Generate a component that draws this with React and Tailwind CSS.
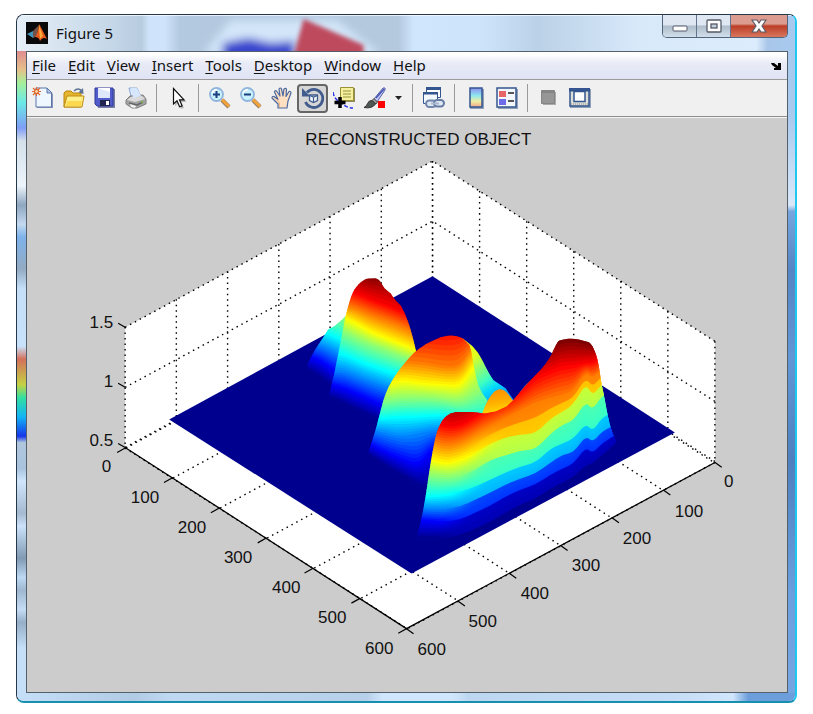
import { useId } from "react"

const MENUS = ["File", "Edit", "View", "Insert", "Tools", "Desktop", "Window", "Help"]

const LEVELS = [1, 0.87, 0.75, 0.62, 0.5, 0.375, 0.25, 0.12, 0]

// each column: x, then the y of every level in LEVELS
const BUMP = [
  [304, 280, 288, 294, 300, 312, 328, 342, 354, 368],
  [318, 280, 288, 294, 300, 314, 329, 343, 358, 376],
  [330, 280, 288, 294, 300, 313, 333, 349, 367, 386],
  [346, 280, 288, 296, 303, 318, 340, 358, 376, 396],
]

const BACK_HILL = [
  [328, 265, 285, 300, 312, 328, 350, 370, 383, 397],
  [340, 268, 288, 303, 315, 330, 351, 369, 386, 402],
  [355, 270, 292, 307, 322, 338, 358, 375, 392, 410],
  [370, 274, 299, 314, 331, 345, 364, 381, 399, 416],
  [385, 274, 304, 319, 337, 350, 369, 386, 405, 423],
  [400, 278, 310, 325, 343, 356, 374, 391, 411, 429],
  [418, 288, 318, 333, 350, 362, 379, 397, 417, 436],
]

const MIDDLE_HILL = [
  [364, 320, 340, 360, 382, 400, 417, 428, 440, 452],
  [380, 318, 338, 360, 384, 401, 417, 431, 449, 463],
  [400, 310, 332, 360, 379, 398, 415, 436, 457, 475],
  [418, 305, 330, 361, 382, 398, 415, 433, 464, 486],
  [430, 300, 329, 363, 383, 398, 414, 430, 449, 492],
  [445, 298, 330, 366, 384, 400, 414, 428, 442, 495],
  [460, 298, 328, 365, 385, 402, 418, 432, 446, 495],
  [472, 300, 322, 344, 366, 396, 420, 434, 448, 495],
  [490, 300, 315, 330, 345, 385, 420, 434, 448, 495],
]

const RIDGE = [
  [410, 390, 416, 436, 456, 474, 494, 507, 518, 538],
  [430, 395, 420, 439, 458, 475, 495, 508, 520, 539],
  [445, 396, 426, 444, 463, 477, 494, 508, 521, 537],
  [460, 396, 425, 441, 459, 475, 491, 506, 519, 533],
  [475, 392, 416, 432, 452, 469, 486, 499, 512, 527],
  [490, 388, 406, 424, 443, 459, 479, 492, 505, 520],
  [505, 380, 400, 417, 437, 455, 472, 484, 496, 511],
  [520, 372, 391, 409, 434, 450, 466, 478, 489, 503],
  [535, 356, 376, 402, 433, 449, 462, 473, 484, 497],
  [550, 343, 370, 397, 418, 433, 448, 462, 474, 487],
  [562, 339, 365, 394, 411, 424, 443, 454, 468, 481],
  [573, 338, 365, 390, 404, 420, 438, 452, 463, 475],
  [585, 341, 362, 371, 383, 401, 423, 435, 447, 464],
  [592, 343, 362, 378, 396, 410, 431, 442, 453, 462],
  [602, 345, 356, 367, 382, 394, 416, 430, 442, 453],
  [616, 345, 356, 366, 380, 392, 411, 424, 434, 441],
]

const clamp = (v) => Math.max(0, Math.min(1, v))

function jet(t) {
  const c = [3, 2, 1].map((k) => Math.round(255 * clamp(1.5 - Math.abs(4 * t - k))))
  return `rgb(${c.join(",")})`
}

function curve(points) {
  let d = `${points[0][0]} ${points[0][1]}`
  for (let i = 1; i < points.length - 1; i++) {
    const [x, y] = points[i]
    const [nx, ny] = points[i + 1]
    d += `Q${x} ${y} ${(x + nx) / 2} ${(y + ny) / 2}`
  }
  const last = points[points.length - 1]
  return `${d}L${last[0]} ${last[1]}`
}

// every band reaches a little under the next one so that no seam shows
function bands(columns, steps) {
  const out = []
  for (let i = 0; i < LEVELS.length - 1; i++) {
    const n = steps(LEVELS[i])
    const at = (f) => columns.map((c) => [c[0], c[i + 1] + (c[i + 2] - c[i + 1]) * f])
    for (let s = 0; s < n; s++) {
      const t = LEVELS[i] + (LEVELS[i + 1] - LEVELS[i]) * (n === 1 ? 0.5 : s / n)
      const top = at(s / n)
      const bottom = at((s + 1) / n).map(([x, y]) => [x, y + 1]).reverse()
      out.push({ fill: jet(t), d: `M${curve(top)}L${curve(bottom)}Z` })
    }
  }
  return out
}

function Hill({ outline, columns, stepped }) {
  const id = useId()
  return (
    <g clipPath={`url(#${id})`}>
      <clipPath id={id}>
        <path d={outline} />
      </clipPath>
      {bands(columns, () => 7).map((b, i) => (
        <path key={i} d={b.d} fill={b.fill} />
      ))}
      {stepped && (
        <g mask="url(#stepFade)" opacity="0.85">
          {bands(columns, (t) => (t > 0.8 ? 7 : t > 0.7 ? 2 : 1)).map((b, i) => (
            <path key={i} d={b.d} fill={b.fill} />
          ))}
        </g>
      )}
    </g>
  )
}

const steps = [0, 1, 2, 3, 4, 5, 6]

const X_LABELS = [[111, 472], [159, 502], [206, 532], [252, 562], [300, 592], [346, 622], [393, 653]]
const Y_LABELS = [[723, 487], [674, 516], [622, 543], [571, 570], [520, 598], [468, 626], [417, 654]]
const Z_LABELS = [["1.5", 113, 328], ["1", 113, 387], ["0.5", 113, 446]]

function SurfacePlot() {
  return (
    <svg viewBox="27 118 759 573" className="block h-auto w-full" role="img" aria-label="Reconstructed object surface">
      <defs>
        <linearGradient id="stepRamp" gradientUnits="userSpaceOnUse" x1="462" y1="470" x2="486" y2="480">
          <stop offset="0" stopColor="#000" />
          <stop offset="1" stopColor="#fff" />
        </linearGradient>
        <mask id="stepFade" maskUnits="userSpaceOnUse" x="400" y="320" width="230" height="240">
          <rect x="400" y="320" width="230" height="240" fill="url(#stepRamp)" />
        </mask>
        <linearGradient id="flank" gradientUnits="userSpaceOnUse" x1="470" y1="358" x2="500" y2="402">
          <stop offset="0" stopColor="#e4ff1b" />
          <stop offset="0.25" stopColor="#8fff70" />
          <stop offset="0.5" stopColor="#40ffc0" />
          <stop offset="0.7" stopColor="#00d8ff" />
          <stop offset="1" stopColor="#0c8cff" />
        </linearGradient>
        <linearGradient id="knob" x1="0" y1="0" x2="0.2" y2="1">
          <stop offset="0" stopColor="#ff8a00" />
          <stop offset="0.5" stopColor="#ffae00" />
          <stop offset="1" stopColor="#ffe600" />
        </linearGradient>
        <linearGradient id="farSide" x1="0" y1="0.5" x2="1" y2="0.3">
          <stop offset="0" stopColor="#20c8ff" />
          <stop offset="0.5" stopColor="#50ffb0" />
          <stop offset="1" stopColor="#a0ff60" />
        </linearGradient>
      </defs>

      <path d="M125 327 432 161 714 341V462L406 628 125 447Z" fill="#fff" />

      <g fill="none" stroke="#000" strokeWidth="1.4" strokeDasharray="1.5 4">
        {[0, 60, 120].map((dz) => (
          <path key={dz} d={`M125 ${327 + dz}L432 ${161 + dz}L714 ${341 + dz}`} />
        ))}
        {steps.map((i) => (
          <g key={i}>
            <path d={`M${432 - i * 51.17} ${161 + i * 27.6}v121l281 180`} />
            <path d={`M${432 + i * 47} ${161 + i * 30}v121l-307 166`} />
          </g>
        ))}
      </g>

      <path d="M125 447 406 628 714 462" fill="none" stroke="#000" strokeWidth="1.3" />
      <g stroke="#000" strokeWidth="1.2">
        {steps.map((i) => (
          <g key={i}>
            <path d={`M${126 + i * 46.8} ${447 + i * 30.1}l-9 5`} />
            <path d={`M${406 + i * 51.3} ${628 - i * 27.7}l7 5`} />
          </g>
        ))}
        <path d="M125 327l-7-4M125 387l-7-4M125 447l-7-4" />
      </g>

      <path d="M432 276 674 432 411 573 169 419Z" fill="#00008f" />

      <Hill columns={BUMP} outline="M304 372 309 360 315 349 321 340 328 329 334 326 342 319 347 314 344 340 336 380 330 396Z" />
      <Hill
        columns={BACK_HILL}
        outline="M327 400C333 381 336 362 340 343C344 322 347 304 353 291C357 284 363 279 368 278H375Q379 279 381 283L384 288 390 293 395 300 400 305C405 313 410 327 413 340L416 353 420 440 327 440Z"
      />
      <path d="M462 338 472 346 477 352C482 359 487 372 493 380L505 388 514 401 504 416 480 414Z" fill="url(#flank)" />
      <Hill
        columns={MIDDLE_HILL}
        outline="M366 456C373 440 377 422 381 407C386 387 394 375 405 362C413 352 421 346 429 342L440 337Q453 333 462 338L469 345C472 354 472 364 475 374C477 386 481 393 487 400L482 415 450 440 440 510H366Z"
      />
      <path d="M514 402C519 391 525 383 535 377L530 395 516 406Z" fill="url(#farSide)" />
      <path d="M480 418C485 403 491 390 499 389C507 389 509 398 516 404L510 418Z" fill="url(#knob)" />
      <Hill
        stepped
        columns={RIDGE}
        outline="M414 542C421 523 424 504 427 483C431 458 434 435 439 425Q444 413 455 411.500H473L484 413 495 411 506 406C514 400 521 389 530 380C539 371 546 364 551 354C555 345 558 338 563 337L579 338C587 339 591 343 594 351C598 361 599 373 601 385C605 402 607 421 612 433L616 442 560 500 470 545Z"
      />

      <g className="font-['Liberation_Sans',Arial,sans-serif] text-[17px]" fill="#111">
        <text x="305" y="145">RECONSTRUCTED OBJECT</text>
        {X_LABELS.map(([x, y], i) => (
          <text key={i} x={x} y={y} textAnchor="end">{i * 100}</text>
        ))}
        {Y_LABELS.map(([x, y], i) => (
          <text key={i} x={x} y={y}>{i * 100}</text>
        ))}
        {Z_LABELS.map(([label, x, y]) => (
          <text key={label} x={x} y={y} textAnchor="end">{label}</text>
        ))}
      </g>
    </svg>
  )
}

function Icon({ children }) {
  return (
    <svg viewBox="0 0 22 22" className="size-[22px] shrink-0" aria-hidden="true">
      {children}
    </svg>
  )
}

function NewIcon() {
  return (
    <Icon>
      <path d="M5 2h11l5 5v14H5z" fill="#8a93b8" />
      <path d="M4 1h11l4.500 4.500V20H4z" fill="#eef6ff" stroke="#5a74ac" />
      <path d="M15 1v5h5z" fill="#b8c9e8" stroke="#5a74ac" />
      <path d="M4.500 0v9M0 4.500h9M1 1l7 7M8 1 1 8" stroke="#e2672c" strokeWidth="1.200" />
      <circle cx="4.500" cy="4.500" r="2" fill="#ffd9a0" stroke="#d9531e" />
    </Icon>
  )
}

function OpenIcon() {
  return (
    <Icon>
      <path d="M1 20V6l2-2h5l2 2h8v14z" fill="#e5b52f" stroke="#b98508" />
      <path d="M4 9h17l-2 11H1z" fill="#fff08a" stroke="#bd8c10" />
      <path d="M4 14h15l-1 5H3z" fill="#fbd84e" />
      <path d="M11 4q4-4 8 0" fill="none" stroke="#5d7394" strokeWidth="1.500" />
      <path d="m20 1 .5 6-5-1.500z" fill="#5d7394" />
    </Icon>
  )
}

function SaveIcon() {
  return (
    <Icon>
      <path d="M2 2h19v19H4z" fill="#777fa6" />
      <path d="M1 1h18v18H3l-2-2z" fill="#4f5cca" stroke="#30389a" />
      <path d="M4 1h12v10H4z" fill="#dfe8fa" />
      <path d="M4 1h12v4z" fill="#fff" />
      <path d="M6 13h10v6H6z" fill="#22264e" />
      <path d="M12 14h3v4h-3z" fill="#fff" />
    </Icon>
  )
}

function PrintIcon() {
  return (
    <Icon>
      <path d="M4 1h8l4 9-9 3z" fill="#dceaff" stroke="#8ba7d6" />
      <path d="M1 13 5 9l13-1 3 4v5l-9 4H7l-6-4z" fill="#a2a2a2" stroke="#808080" />
      <path d="m2 13 4-3 11-1 3 3-10 3z" fill="#dadada" />
      <path d="M6 1h6l4 8-8 2z" fill="#d5e6fd" />
      <path d="M4 16l8 2 6-3" fill="none" stroke="#666" strokeWidth="1.500" />
      <path d="m5 17 6 2-1 2-4-1z" fill="#f4f4f4" />
      <path d="M16 15h2" stroke="#76bb3f" strokeWidth="1.500" />
    </Icon>
  )
}

function PointerIcon() {
  return (
    <Icon>
      <path d="M8 3v16l3.500-3 2.500 6 3-1-2.500-6h5z" fill="#999" opacity=".6" />
      <path d="M6.500 1.500v15.500l3.500-3.200 2.600 6 2.500-1-2.600-6H17z" fill="#fff" stroke="#111" strokeWidth="1.200" />
    </Icon>
  )
}

function ZoomIcon({ plus }) {
  return (
    <Icon>
      <path d="m13 13 7 7" stroke="#9a7f69" strokeWidth="4.500" />
      <path d="m13 12.500 7 7" stroke="#f2a33c" strokeWidth="3" />
      <circle cx="7.500" cy="7.500" r="6.500" fill="#c9f1fb" stroke="#8fb4dd" strokeWidth="1.800" />
      <path d="M3 6q1-3 5-3.500" fill="none" stroke="#fff" strokeWidth="1.500" />
      <path d="M4 7.500h7" stroke="#1c3f80" strokeWidth="2" />
      {plus && <path d="M7.500 4v7" stroke="#1c3f80" strokeWidth="2" />}
    </Icon>
  )
}

function HandIcon() {
  return (
    <Icon>
      <path
        d="M7 21v-4L1 11q0-2 2-1.500l4 3L3.500 5q.5-2 2-1L9 9 8 2q1.500-2 2.500 0l1.500 7 1-7q2-1.500 2.500.5L15 9.500l3-5q2-.5 2 1.500l-3 8-1 7z"
        fill="#ffdfc2"
        stroke="#4b689e"
        strokeWidth="1.200"
        strokeLinejoin="round"
      />
      <path d="M8.500 20v-4l-3-4" fill="none" stroke="#f0b78b" />
    </Icon>
  )
}

function RotateIcon() {
  return (
    <Icon>
      <path d="M5 5.500A9 9 0 1 1 3.500 15" fill="none" stroke="#415c8d" strokeWidth="2.800" />
      <path d="M0 1v8.500h8.500z" fill="#415c8d" />
      <path d="M7.500 8h8v5.500l-4 2-4-2z" fill="#eef3fa" stroke="#415c8d" strokeWidth="1.300" />
      <path d="m7.500 8.500 4 1.500 4-1.500M11.500 10v5.500" fill="none" stroke="#415c8d" strokeWidth="1.200" />
    </Icon>
  )
}

function DataCursorIcon() {
  return (
    <Icon>
      <path d="M8 1h14v14H8z" fill="#8f8a5a" />
      <path d="M7.500.5h13v13h-13z" fill="#f5f0a0" stroke="#9a9232" />
      <path d="M10 4h8M10 7h8M10 10h8" stroke="#98923c" />
      <path d="M0 5q1 7 7 10 6 6 13 6" fill="none" stroke="#2a30ee" strokeWidth="1.500" strokeDasharray="4 2" />
      <path d="M7 10v11M1.500 15.500h11" stroke="#000" strokeWidth="3.500" />
    </Icon>
  )
}

function BrushIcon() {
  return (
    <Icon>
      <path d="m10 12 9-11q3-1 2 2l-8 12z" fill="#c5cdf2" stroke="#5661a8" />
      <path d="M12 11 20 2" stroke="#4652b5" strokeWidth="1.500" />
      <path d="M10 11.500 13.500 15l-1.500 2-4-3.500z" fill="#9c9c9c" stroke="#444" />
      <path d="M8 13.500 11.500 17Q8 22 0 20.500 3 19 3.500 16.500 5 13 8 13.500z" fill="#4f5753" stroke="#333" />
      <path d="M14 14h7v7h-7z" fill="#f00" />
    </Icon>
  )
}

function LinkIcon() {
  return (
    <Icon>
      <path d="M3.500.5h14v10h-14z" fill="#fff" stroke="#34558f" />
      <path d="M3 0h15v3H3z" fill="#34558f" />
      <path d="M.5 5.500h14v11H.5z" fill="#f4f8ff" stroke="#34558f" />
      <path d="M0 5h15v2.500H0z" fill="#34558f" />
      <rect x="3" y="13.500" width="10" height="6.500" rx="3.200" fill="#dfe7f3" stroke="#7186ab" strokeWidth="2" />
      <rect x="11" y="13" width="10" height="6.500" rx="3.200" fill="#dfe7f3" stroke="#667ca4" strokeWidth="2" />
      <path d="M8 16.500h8" stroke="#a9b7cf" strokeWidth="2" />
    </Icon>
  )
}

function ColorbarIcon() {
  return (
    <Icon>
      <defs>
        <linearGradient id="bar" x1="0" y1="0" x2="0" y2="1">
          <stop offset="0" stopColor="#8e8df0" />
          <stop offset="0.4" stopColor="#8ee7ee" />
          <stop offset="0.7" stopColor="#f1efa0" />
          <stop offset="1" stopColor="#f2a88e" />
        </linearGradient>
      </defs>
      <path d="M5 2h14v20H5z" fill="#8fa0b8" />
      <path d="M5 1h12v19H5z" fill="url(#bar)" stroke="#34558f" strokeWidth="1.500" />
    </Icon>
  )
}

function LegendIcon() {
  return (
    <Icon>
      <path d="M2 2h20v20H2z" fill="#8fa0b8" />
      <path d="M1 1h19v19H1z" fill="#f2f6fd" stroke="#34558f" strokeWidth="1.500" />
      <path d="M3 4h7v6H3z" fill="#e76668" />
      <path d="M3 12h7v6H3z" fill="#6c6ce8" />
      <path d="M12 6h6M12 14h6" stroke="#222" strokeWidth="1.500" />
    </Icon>
  )
}

function HideToolsIcon() {
  return (
    <Icon>
      <path d="M5 5h13v13H5z" fill="#aaa" />
      <path d="M3.500 3.500h13v13h-13z" fill="#969696" stroke="#858585" />
      <path d="M4 4h12v2H4z" fill="#858585" />
    </Icon>
  )
}

function ShowToolsIcon() {
  return (
    <Icon>
      <path d="M1 2h21v19H1z" fill="#8fa0b8" />
      <path d="M1 2h19v17H1z" fill="#dcdfd8" stroke="#34558f" strokeWidth="1.500" />
      <path d="M0 1h21v3.500H0z" fill="#34558f" />
      <path d="M5 4.500h11v10H5z" fill="#fff" stroke="#34558f" strokeWidth="1.500" />
      <path d="M2 17h17" stroke="#8c8d83" strokeDasharray="1 1" />
    </Icon>
  )
}

function Tool({ label, pressed, children }) {
  return (
    <button
      type="button"
      aria-label={label}
      aria-pressed={pressed}
      className={
        pressed
          ? "flex h-[29px] w-[31px] shrink-0 items-center justify-center rounded-[4px] border-2 border-[#666] bg-[#d6d6d6]"
          : "flex h-[29px] w-[31px] shrink-0 items-center justify-center"
      }
    >
      {children}
    </button>
  )
}

function Separator() {
  return (
    <div className="flex w-[11px] shrink-0 justify-center">
      <div className="h-7 w-px bg-[#9a9a9a]" />
    </div>
  )
}

function Toolbar() {
  return (
    <div className="flex h-[37px] items-center border-b border-[#8c8c8c] bg-[#f0f0f0]" role="toolbar">
      <Tool label="New Figure"><NewIcon /></Tool>
      <Tool label="Open File"><OpenIcon /></Tool>
      <Tool label="Save Figure"><SaveIcon /></Tool>
      <Tool label="Print Figure"><PrintIcon /></Tool>
      <Separator />
      <Tool label="Edit Plot"><PointerIcon /></Tool>
      <Separator />
      <Tool label="Zoom In"><ZoomIcon plus /></Tool>
      <Tool label="Zoom Out"><ZoomIcon /></Tool>
      <Tool label="Pan"><HandIcon /></Tool>
      <Tool label="Rotate 3D" pressed><RotateIcon /></Tool>
      <Tool label="Data Cursor"><DataCursorIcon /></Tool>
      <Tool label="Brush"><BrushIcon /></Tool>
      <button type="button" aria-label="Brush options" className="flex h-7 w-[17px] shrink-0 items-center justify-center">
        <svg viewBox="0 0 7 4" className="h-1 w-[7px]"><path d="M0 0h7L3.500 4z" fill="#222" /></svg>
      </button>
      <Separator />
      <Tool label="Link Plot"><LinkIcon /></Tool>
      <Separator />
      <Tool label="Insert Colorbar"><ColorbarIcon /></Tool>
      <Tool label="Insert Legend"><LegendIcon /></Tool>
      <Separator />
      <Tool label="Hide Plot Tools"><HideToolsIcon /></Tool>
      <Tool label="Show Plot Tools"><ShowToolsIcon /></Tool>
    </div>
  )
}

function MenuBar() {
  return (
    <nav className="flex h-7 items-center gap-3 border-b border-[#9b9b9b] bg-linear-to-b from-white from-10% via-[#e9ebf6] via-40% to-[#dfe3f4] px-[5px] font-['Noto_Sans','Open_Sans',sans-serif] text-[15px] text-[#111]">
      {MENUS.map((m) => (
        <button key={m} type="button">
          <span className="underline underline-offset-2">{m[0]}</span>
          {m.slice(1)}
        </button>
      ))}
      <button type="button" aria-label="Dock Figure" className="mr-px ml-auto">
        <svg viewBox="0 0 10 8" className="h-2 w-[10px]">
          <path d="M0 1h3l4 3V1h3v7H3V6h2L1 3z" fill="#000" />
        </svg>
      </button>
    </nav>
  )
}

function GlassBackdrop() {
  return (
    <svg viewBox="0 0 779 36" preserveAspectRatio="none" className="absolute inset-0 size-full" aria-hidden="true">
      <defs>
        <filter id="soft" x="-10%" y="-40%" width="120%" height="180%">
          <feGaussianBlur stdDeviation="4" />
        </filter>
        <filter id="softer" x="-10%" y="-40%" width="120%" height="180%">
          <feGaussianBlur stdDeviation="2" />
        </filter>
        <linearGradient id="glass" x1="0" x2="1" y1="0" y2="0">
          <stop offset="0" stopColor="#e6eff7" />
          <stop offset="0.12" stopColor="#c5d7e8" />
          <stop offset="0.16" stopColor="#b8cce0" />
          <stop offset="0.17" stopColor="#cfe4fa" />
          <stop offset="0.19" stopColor="#cfe4fa" />
          <stop offset="0.21" stopColor="#b3c9df" />
          <stop offset="0.49" stopColor="#b4c8de" />
          <stop offset="0.51" stopColor="#cfe6fd" />
          <stop offset="0.6" stopColor="#cde3fa" />
          <stop offset="0.67" stopColor="#bbd1e7" />
          <stop offset="0.8" stopColor="#d8e9fa" />
          <stop offset="0.95" stopColor="#dcecfc" />
          <stop offset="0.965" stopColor="#a8c6e8" />
          <stop offset="1" stopColor="#a8caef" />
        </linearGradient>
      </defs>
      <path d="M0 0h779v36H0z" fill="url(#glass)" />
      <g filter="url(#soft)">
        <path d="M186 40 214 5H320l45 35z" fill="#d3e6f9" />
        <path d="M206 44V28l26-5 22 5 24-2v18z" fill="#3944ce" />
      </g>
      <path d="M276 44 287 4l60 26v14z" fill="#bd4257" opacity="0.95" filter="url(#softer)" />
      <path d="M0 0h779v1H0z" fill="#fff" opacity="0.7" />
    </svg>
  )
}

function TitleBar() {
  return (
    <header className="relative flex h-9 items-start">
      <GlassBackdrop />
      <div className="relative flex h-9 items-center gap-2 pl-[9px] font-['Noto_Sans','Open_Sans',sans-serif] text-[15px] text-[#111]">
        <svg viewBox="0 0 22 22" className="size-[22px]" aria-hidden="true">
          <path d="M0 0h22v22H0z" fill="#090909" />
          <path d="m1 12 6-3 4 3-4 4z" fill="#4193b7" />
          <path d="m7 9 6-6-2 11-4 2z" fill="#73524a" />
          <path d="M13 2q3 5 8 15-4-3-7 2-1-4-5-4 3-4 4-13z" fill="#e35a1c" />
          <path d="M13 3q0 7 1 14l3-3z" fill="#ffac3c" />
        </svg>
        <h1>Figure 5</h1>
      </div>
      <div className="relative mr-[7px] ml-auto flex h-[23px] overflow-hidden rounded-b-[5px] border border-t-0 border-[#50647c]">
        <button type="button" aria-label="Minimize" className="flex w-[34px] items-center justify-center border-r border-[#62758c] bg-linear-to-b from-[#dfe8f2] from-45% via-[#aebccb] via-50% to-[#d2dfeb]">
          <svg viewBox="0 0 16 16" className="size-4"><rect x="1" y="8" width="14" height="5" rx="1" fill="#fff" stroke="#555b68" /></svg>
        </button>
        <button type="button" aria-label="Maximize" className="flex w-[34px] items-center justify-center border-r border-[#62758c] bg-linear-to-b from-[#dfe8f2] from-45% via-[#aebccb] via-50% to-[#d2dfeb]">
          <svg viewBox="0 0 16 16" className="size-4">
            <rect x="1" y="2" width="14" height="12" rx="1" fill="#fff" stroke="#555b68" strokeWidth="1.300" />
            <rect x="5" y="6" width="6" height="4" fill="#c2cedb" stroke="#555b68" strokeWidth="1.300" />
          </svg>
        </button>
        <button type="button" aria-label="Close" className="flex w-14 items-center justify-center bg-linear-to-b from-[#dd9c90] from-40% via-[#bb3d27] via-50% to-[#d9765d]">
          <svg viewBox="0 0 16 14" className="h-[14px] w-4">
            <path d="M1 1h5l2 3 2-3h5l-4 6 4 6h-5L8 10l-2 3H1l4-6z" fill="#fff" stroke="#5c5866" strokeWidth="1.200" />
          </svg>
        </button>
      </div>
    </header>
  )
}

export default function App() {
  return (
    <div className="bg-white px-4 py-[14px]">
      <div className="overflow-hidden rounded-lg border border-r-2 border-b-2 border-[#25384a] border-r-[#1fc8ee] border-b-[#178fae] bg-[#cde3fa]">
        <TitleBar />
        <div className="flex">
          <div className="w-[9px] shrink-0 bg-[linear-gradient(to_bottom,#e08c90_0%,#e4c28a_3%,#a5f09a_5%,#6ce9e6_8%,#7f9df5_12%,#d4e0ea_14%,#edf4fb_21%,#8ea6bf_24%,#c3d9f0_27%,#7db2ea_29%,#94abc3_34%,#c5dff8_37%,#c9e2fb_46%,#d4705a_48%,#c4d243_52%,#32dfa0_54%,#12b4f5_57%,#1535ea_60%,#b0c6dc_61%,#a9c3de_65%,#cfe6fd_67%,#a5bad0_72%,#cbe2fa_74%,#8199b3_79%,#bdd8f3_82%,#9fb7d0_84%,#c5dcf4_87%,#96aec8_89%,#c5dff9_93%,#c5dff9_100%)]" />
          <main className="min-w-0 flex-1 border border-[#56606b] bg-[#ccc]">
            <MenuBar />
            <Toolbar />
            <div className="border-t border-[#f4f4f4]">
              <SurfacePlot />
            </div>
          </main>
          <div className="w-[7px] shrink-0 bg-[linear-gradient(to_bottom,#a8caef_0%,#a9c9ee_10%,#dae8f8_24%,#77a5de_25%,#5585c3_34%,#6396d5_48%,#4d80bd_64%,#6c9fdd_85%,#76a6e2_100%)]" />
        </div>
        <div className="h-2 bg-[linear-gradient(to_right,#c5dff9_0%,#b1cbe5_15%,#bfd9f3_20%,#b7d0e9_45%,#d0e6fd_47%,#d0e6fd_56%,#bed7f0_58%,#c4dcf5_84%,#d1e6fc_92%,#6c9edb_94%,#6c9edb_100%)]" />
      </div>
    </div>
  )
}
